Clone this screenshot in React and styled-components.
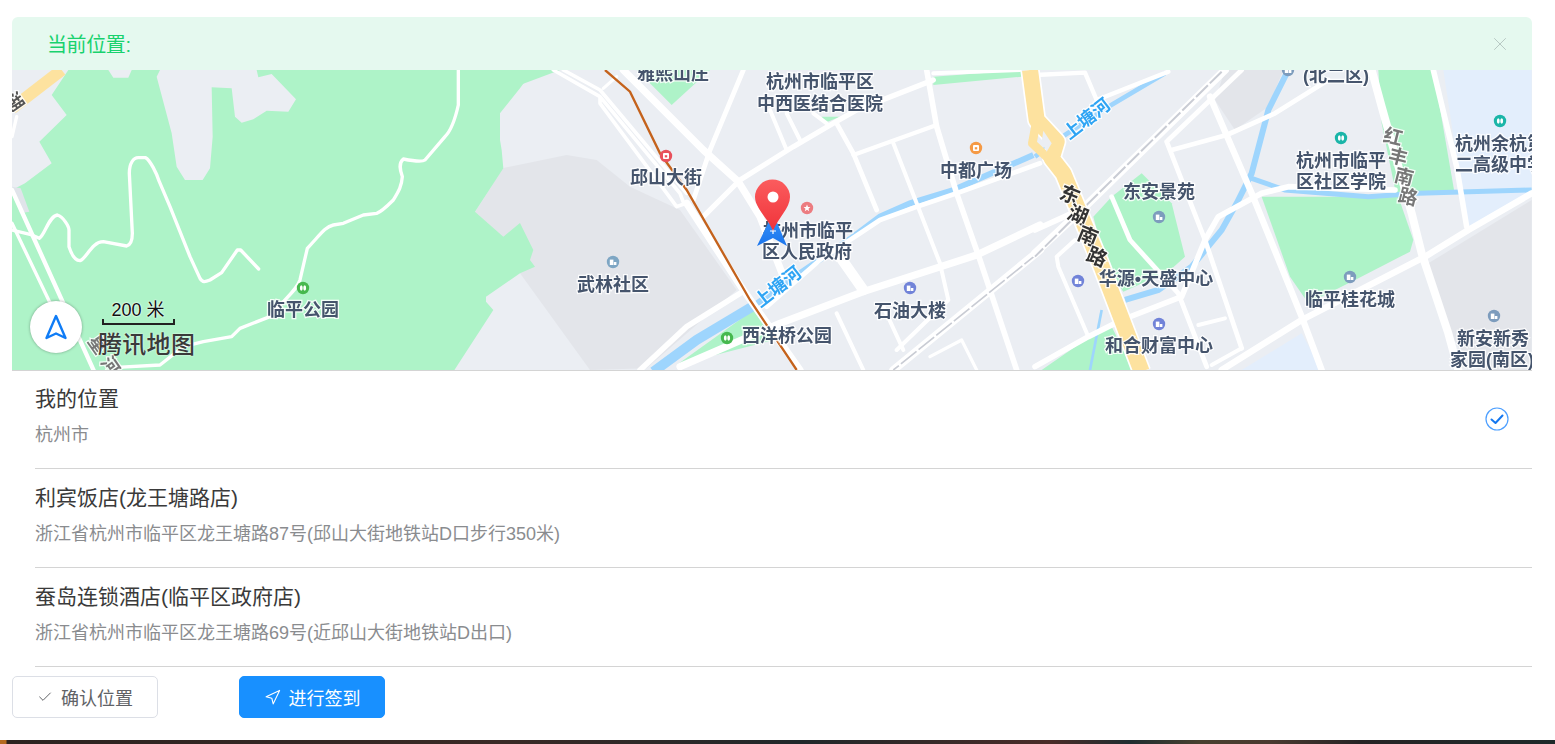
import React from "react";
import styled, { createGlobalStyle } from "styled-components";
import { Check, Navigation, X } from "lucide-react";

const GlobalStyle = createGlobalStyle`
  html, body {
    margin: 0;
    padding: 0;
    height: 100%;
    overflow: hidden;
    background: #fff;
    font-family: "Liberation Sans", "Noto Sans CJK SC", sans-serif;
  }
`;

const Page = styled.div`
  height: 744px;
  display: flex;
  flex-direction: column;
  box-sizing: border-box;
  padding-top: 17px;
`;

const Content = styled.div`
  flex: 1;
  padding: 0 23px 0 12px;
`;

const Alert = styled.div`
  height: 53px;
  box-sizing: border-box;
  padding: 0 21px 0 35px;
  display: flex;
  align-items: center;
  justify-content: space-between;
  background: #e5f9ef;
  border-radius: 6px 6px 0 0;
  color: #18d26e;
  font-size: 20px;
  letter-spacing: -0.4px;
`;

const CloseIcon = styled(X)`
  color: #b4c4bf;
  width: 22px;
  height: 22px;
`;

const MapBox = styled.div`
  position: relative;
  height: 300px;
  overflow: hidden;
  background: #ebeef3;
`;

const MapCanvas = styled.svg`
  display: block;
  width: 1520px;
  height: 300px;
  filter: blur(0.45px);
`;

const MapLabel = styled.text`
  font-family: "Liberation Sans", "Noto Sans CJK SC", sans-serif;
  font-weight: 700;
  font-size: ${(p) => p.$size || 18}px;
  fill: ${(p) => p.$color || "#45546c"};
  text-anchor: middle;
  dominant-baseline: central;
  paint-order: stroke;
  stroke: rgba(255, 255, 255, 0.85);
  stroke-width: 2.5px;
`;

const Compass = styled.div`
  position: absolute;
  left: 18px;
  top: 231px;
  width: 52px;
  height: 52px;
  border-radius: 50%;
  background: #fff;
  box-shadow: 0 0 3px rgba(0, 0, 0, 0.35);
  display: flex;
  align-items: center;
  justify-content: center;
`;

const Scale = styled.div`
  position: absolute;
  left: 90px;
  top: 229px;
  width: 73px;
  height: 26px;
  box-sizing: border-box;
  border: 2px solid #222;
  border-top: 0;
  clip-path: polygon(0 20px, 100% 20px, 100% 100%, 0 100%);
`;

const ScaleText = styled.div`
  position: absolute;
  left: 78px;
  top: 228px;
  width: 96px;
  text-align: center;
  font-size: 18px;
  line-height: 24px;
  color: #111;
  text-shadow: 0 0 2px #fff, 0 0 2px #fff;
`;

const Brand = styled.div`
  position: absolute;
  left: 86px;
  top: 255px;
  font-family: "Noto Sans CJK SC", sans-serif;
  font-weight: 500;
  font-size: 24px;
  line-height: 36px;
  letter-spacing: 0.3px;
  color: #3a3a3a;
  text-shadow: 0 0 2px #fff;
`;

const List = styled.div`
  display: flex;
  flex-direction: column;
`;

const Row = styled.div`
  position: relative;
  height: 99px;
  box-sizing: border-box;
  padding: 0 23px 1px;
  display: flex;
  align-items: center;
  justify-content: space-between;
  &::after {
    content: "";
    position: absolute;
    left: 23px;
    right: 0;
    bottom: 0;
    height: 1px;
    background: #d4d4d4;
  }
  &:first-child::before {
    content: "";
    position: absolute;
    left: 0;
    right: 0;
    top: 0;
    height: 1px;
    background: #d4d4d4;
  }
`;

const RowText = styled.div`
  align-self: flex-start;
  padding-top: 11px;
`;

const RowTitle = styled.div`
  font-size: 21px;
  line-height: 36px;
  color: #3a3a3a;
`;

const RowSub = styled.div`
  font-size: 18px;
  line-height: 36px;
  color: #8a8c8f;
`;

const Actions = styled.div`
  display: flex;
  gap: 81px;
  margin-top: 9px;
`;

const Button = styled.button`
  width: 146px;
  height: 42px;
  box-sizing: border-box;
  display: flex;
  align-items: center;
  justify-content: center;
  gap: 8px;
  padding: 0;
  border-radius: 5px;
  border: 1px solid ${(p) => (p.$primary ? "#1890ff" : "#dcdfe6")};
  background: ${(p) => (p.$primary ? "#1890ff" : "#fff")};
  color: ${(p) => (p.$primary ? "#fff" : "#606266")};
  font-family: inherit;
  font-size: 18px;
`;

const BottomStrip = styled.div`
  height: 4px;
  background: linear-gradient(
    90deg,
    #b56a20 0,
    #b56a20 6px,
    #2c2320 7px,
    #3a2a26 500px,
    #20282a 800px,
    #4a2c28 1050px,
    #1f2d30 1130px,
    #48402f 1200px,
    #4a3a30 1270px,
    #262425 1360px,
    #1e2a2a 1555px
  );
`;

const PLACES = [
  { title: "我的位置", sub: "杭州市", selected: true },
  { title: "利宾饭店(龙王塘路店)", sub: "浙江省杭州市临平区龙王塘路87号(邱山大街地铁站D口步行350米)" },
  { title: "蚕岛连锁酒店(临平区政府店)", sub: "浙江省杭州市临平区龙王塘路69号(近邱山大街地铁站D出口)" },
];

const LABELS = [
  ["雅熙山庄", 673, 74], ["杭州市临平区", 820, 82], ["中西医结合医院", 820, 104],
  ["邱山大街", 666, 178], ["武林社区", 613, 285], ["临平公园", 303, 310],
  ["杭州市临平", 808, 231], ["区人民政府", 807, 252], ["中都广场", 976, 171],
  ["石油大楼", 910, 311], ["西洋桥公园", 787, 336], ["东安景苑", 1159, 192],
  ["华源•天盛中心", 1156, 279], ["和合财富中心", 1159, 346], ["临平桂花城", 1350, 300],
  ["杭州市临平", 1341, 161], ["区社区学院", 1341, 182], ["(北二区)", 1336, 76],
  ["杭州余杭第", 1500, 144], ["二高级中学", 1500, 165], ["新安新秀", 1493, 339],
  ["家园(南区)", 1492, 360],
];

const TILTED = [
  ["红", 1393, 137, 14, "#777", 19], ["丰", 1398, 157, 14, "#777", 19], ["南", 1404, 177, 14, "#777", 19], ["路", 1408, 197, 14, "#777", 19],
  ["东", 1070, 195, 22, "#333", 20], ["湖", 1078, 215, 22, "#333", 20], ["南", 1088, 236, 22, "#333", 20], ["路", 1097, 257, 22, "#333", 20],
  ["上塘河", 1087, 119, -38, "#2ea4f4", 18], ["上塘河", 778, 287, -38, "#2ea4f4", 18],
  ["星", 97, 345, 55, "#777", 18], ["河", 110, 366, 55, "#777", 18], ["湖", 14, 102, 55, "#555", 18],
];

const POIS = [
  [666, 156, "#e8505b", "box"], [807, 208, "#ec7c80", "star"], [976, 148, "#f59a45", "box"], [613, 262, "#7ea6c4", "home"],
  [303, 288, "#46b84e", "park"], [910, 288, "#7183d8", "home"], [727, 338, "#46b84e", "park"], [1159, 217, "#7d9cbd", "home"],
  [1078, 281, "#7183d8", "home"], [1159, 324, "#7183d8", "home"], [1350, 277, "#7d9cbd", "home"], [1341, 138, "#1ab5a8", "park"],
  [1500, 121, "#1ab5a8", "park"], [1494, 316, "#7d9cbd", "home"], [1288, 70, "#7d9cbd", "home"],
];

const WHITE_LEFT = [
  ["M36 690 L90 703 L118 715 C135 705 145 650 172 645 C190 650 207 680 207 690 L207 740 C215 765 225 782 240 782 C260 775 275 725 310 725 L380 738 C392 735 397 725 397 700 L388 520 C388 490 400 473 415 473 L437 473 C450 480 470 520 478 545 L510 620 L570 770 L600 835 C608 848 615 846 630 840 L665 818 L712 750 L722 750 L776 807", 10],
  ["M1375 210 L1375 315 C1365 360 1350 395 1335 410 L1275 480 C1265 487 1240 483 1210 477 C1195 490 1200 510 1207 530 C1205 560 1195 575 1180 600 C1160 620 1145 635 1130 640 L1090 645 L1030 670 L1000 675 C975 680 960 705 922 745 L900 840 C890 870 860 890 810 950 L720 985 L695 1010 L610 1025 L550 1040 L480 1095 L350 1102", 10],
  ["M36 570 L285 1120", 13],
  ["M36 670 L170 950", 10],
  ["M36 410 L50 350", 10],
];

const WHITE_MID = [
  ["M310 30 L550 270 L655 365 L720 470 L790 650", 18],
  ["M670 30 L570 270 L520 420", 12],
  ["M1240 60 L1010 150 L940 190 L820 260 L660 360 L550 470", 13],
  ["M1240 40 L1500 30", 10],
  ["M1220 30 L1250 200 L1310 400 L1380 600 L1490 930", 14],
  ["M950 190 L1000 280 L1070 450", 12],
  ["M1250 195 L1000 285", 10],
  ["M1120 250 L1190 430 L1260 610 L1285 720 L1130 870", 10],
  ["M1560 310 L1310 400 L1190 440 L1080 480 L900 600 L740 740", 12],
  ["M960 590 L1030 690", 26],
  ["M1560 495 L1370 585 L1030 695 L780 790 L480 920", 18],
  ["M660 700 L500 800 L360 930", 14],
  ["M950 760 L1030 930", 10],
  ["M1090 740 L1150 870", 10],
  ["M100 30 L240 110 L480 400 L492 432 L470 440 L240 130 L240 110", 9],
  ["M130 30 L240 90 L500 400", 9],
  ["M290 50 L250 85", 8],
  ["M500 430 L670 690 L840 930", 18],
  ["M750 150 L800 270", 10],
  ["M800 160 L840 240", 10],
  ["M880 160 L920 190", 10],
  ["M1230 890 L1325 840 L1370 930", 8],
  ["M1560 570 L1120 930", 20],
];

const WHITE_RIGHT = [
  ["M570 210 L150 620 L0 760", 20],
  ["M620 210 L400 420", 12],
  ["M0 690 L110 640", 14],
  ["M410 450 L575 405 L720 340 L880 240", 12],
  ["M525 290 L650 580 L800 950 L860 1110", 16],
  ["M395 425 L510 720 L620 1045", 12],
  ["M230 590 L285 720 L430 880 L515 1100", 12],
  ["M120 720 L65 770 L70 800 L160 1010", 10],
  ["M0 1100 L160 1010 L260 960 L440 890 L510 720 L550 650 L680 580 L760 560 L1080 570", 14],
  ["M560 1110 L800 960 L1170 770 L1300 690 L1490 580", 16],
  ["M1010 210 L1040 320 L1130 640 L1160 760 L1240 1000 L1270 1110", 20],
  ["M1195 210 L1265 500 L1295 680", 14],
  ["M490 975 L570 955", 10],
  ["M620 1045 L530 1095", 10],
  ["M0 225 L150 218 L185 300", 11],
  ["M185 300 L400 215", 11],
];

const MapRoads = ({ roads, scale = 1 }) =>
  roads.map(([d, w]) => (
    <path key={d} d={d} fill="none" stroke="#fff" strokeWidth={w * scale} strokeLinejoin="round" strokeLinecap="round" />
  ));

const PoiGlyph = ({ type, x, y, color }) => {
  if (type === "star") {
    return <polygon fill="#fff" points={`${x},${y - 3.5} ${x + 1},${y - 1} ${x + 3.4},${y - 1} ${x + 1.5},${y + 0.8} ${x + 2.2},${y + 3.2} ${x},${y + 1.8} ${x - 2.2},${y + 3.2} ${x - 1.5},${y + 0.8} ${x - 3.4},${y - 1} ${x - 1},${y - 1}`} />;
  }
  if (type === "park") {
    return (
      <g fill="#fff">
        <ellipse cx={x - 1.7} cy={y} rx="1.4" ry="2.8" />
        <ellipse cx={x + 1.7} cy={y} rx="1.4" ry="2.8" />
      </g>
    );
  }
  if (type === "home") {
    return (
      <g fill="#fff">
        <rect x={x - 3.2} y={y - 2.4} width="3.6" height="5.4" />
        <rect x={x + 0.8} y={y} width="2.6" height="3" />
      </g>
    );
  }
  return (
    <g>
      <rect x={x - 3} y={y - 3} width="6" height="6" rx="1" fill="#fff" />
      <rect x={x - 1.2} y={y - 0.8} width="2.4" height="2.2" fill={color} />
    </g>
  );
};

const EAST_LAKE = "M-15 210 L5 360 L65 425 L50 475 L85 520 L200 800 L320 1115";

const MapDrawing = () => (
  <MapCanvas viewBox="12 70 1520 300">
    <defs>
      <linearGradient id="arrowFill" x1="0" y1="0" x2="0" y2="1">
        <stop offset="0" stopColor="#3a96fb" />
        <stop offset="1" stopColor="#1a74ec" />
      </linearGradient>
      <linearGradient id="pinFill" x1="0" y1="0" x2="0" y2="1">
        <stop offset="0" stopColor="#fb5c5e" />
        <stop offset="1" stopColor="#f0333a" />
      </linearGradient>
    </defs>

    {/* darker block under the park edge */}
    <g transform="translate(520 60) scale(0.33333)">
      <polygon fill="#e3e5ea" points="-135,456 -51,324 140,285 230,300 330,380 480,450 650,690 380,925 210,930 0,640 -51,531" />
    </g>

    {/* left part, coordinates are 3x */}
    <g transform="scale(0.33333)">
      <polygon fill="#aef3c8" points="205,210 155,285 200,345 118,425 155,490 75,550 36,570 36,1115 1360,1115 1480,930 1458,905 1458,890 1560,820 1605,800 1590,780 1600,750 1560,669 1510,710 1425,635 1510,505 1505,450 1500,420 1500,340 1560,265 1600,210" />
      <polygon fill="#ebeef3" points="470,230 480,210 770,210 775,232 815,222 888,298 865,335 800,332 760,358 725,368 705,350 695,265 635,262 638,410 630,505 608,540 555,540 530,500 515,400" />
      <polygon fill="#ebeef3" points="325,210 395,210 385,233 340,233" />
      <polygon fill="#e0e4ea" points="36,560 62,565 88,635 60,640" />
      <path d="M36 325 L185 210" fill="none" stroke="#fde29f" strokeWidth="36" />
      <MapRoads roads={WHITE_LEFT} />
    </g>

    {/* middle part */}
    <g transform="translate(520 60) scale(0.33333)">
      <polygon fill="#aef3c8" points="350,30 570,30 455,135" />
      <polygon fill="#aef3c8" points="0,30 120,30 0,75" />
      <polygon fill="#aef3c8" points="1240,50 1505,30 1505,50 1240,75" />
      <polygon fill="#aef3c8" points="905,170 960,170 915,188" />
      <polygon fill="#aef3c8" points="700,750 470,915 760,840" />
      <path d="M1540 285 L1300 390 L1170 430 L1080 470 L1000 530 L840 640 L690 745" fill="none" stroke="#9ed5fd" strokeWidth="18" />
      <path d="M700 738 L530 840 L400 935" fill="none" stroke="#9ed5fd" strokeWidth="30" />
      <MapRoads roads={WHITE_MID} scale={1.2} />
      <path d="M1560 575 L1120 930" fill="none" stroke="#c9ccd4" strokeWidth="5" strokeDasharray="60 8" />
      <path d="M255 30 L330 95 L420 280 L500 390 L690 720 L830 930" fill="none" stroke="#c4621c" strokeWidth="7" />
    </g>

    {/* right part, coordinates are 3x */}
    <g transform="translate(1035 0) scale(0.33333)">
      <polygon fill="#e3e5ea" points="570,210 745,210 700,320 600,390 540,300" />
      <polygon fill="#e3e5ea" points="1180,790 1490,600 1490,1110 1330,1110 1240,1000" />
      <polygon fill="#e3eefc" points="1225,210 1490,210 1490,580 1300,680 1260,440" />
      <polygon fill="#e3eefc" points="620,1110 800,1000 860,1110" />
      <polygon fill="#aef3c8" points="1030,210 1195,210 1258,575 1085,592 1040,370" />
      <polygon fill="#aef3c8" points="680,590 1090,590 1135,720 1125,755 960,840 820,910 765,830" />
      <polygon fill="#aef3c8" points="320,520 410,610 450,770 400,815 265,875 215,800 175,650 230,590" />
      <polygon fill="#aef3c8" points="20,1110 150,1020 230,980 295,1110" />
      <path d="M0 470 L90 405 L220 320 L390 220" fill="none" stroke="#9ed5fd" strokeWidth="14" />
      <path d="M760 210 L700 330 L650 520 L605 610 L560 690 L470 800 L370 870 L270 900" fill="none" stroke="#9ed5fd" strokeWidth="18" />
      <path d="M650 535 L750 570 L1000 590 L1150 580 L1490 570" fill="none" stroke="#9ed5fd" strokeWidth="15" />
      <path d="M200 930 L165 1110" fill="none" stroke="#9ed5fd" strokeWidth="8" />
      <MapRoads roads={WHITE_RIGHT} scale={1.2} />
      <path d="M560 215 L150 620 L0 770" fill="none" stroke="#c9ccd4" strokeWidth="6" strokeDasharray="50 8" />
      <path d={EAST_LAKE} fill="none" stroke="#fff" strokeWidth="58" strokeLinejoin="round" />
      <path d={EAST_LAKE} fill="none" stroke="#fde29f" strokeWidth="48" strokeLinejoin="round" />
      <path d="M5 360 L-8 430 L50 485" fill="none" stroke="#fde29f" strokeWidth="26" strokeLinejoin="round" />
      <polygon fill="#ebeef3" points="25,392 50,430 35,455 20,425" />
    </g>

    {POIS.map(([x, y, color, type]) => (
      <g key={`${x}-${y}`}>
        <circle cx={x} cy={y} r="6.2" fill={color} />
        <PoiGlyph type={type} x={x} y={y} color={color} />
      </g>
    ))}

    {LABELS.map(([text, x, y]) => (
      <MapLabel key={`${text}-${x}`} x={x} y={y}>{text}</MapLabel>
    ))}
    {TILTED.map(([text, x, y, angle, color, size]) => (
      <MapLabel key={`${text}-${x}`} x={x} y={y} $color={color} $size={size} transform={`rotate(${angle} ${x} ${y})`}>{text}</MapLabel>
    ))}

    {/* current location arrow and pin */}
    <polygon points="773,213 757,246 773,238 787,246" fill="url(#arrowFill)" />
    <path d="M770 231 h6 M773 228 v6" stroke="#fff" strokeWidth="1.2" fill="none" />
    <path d="M773 231 C768 218 755 208 755 197 A17.5 17.5 0 0 1 790 197 C790 208 778 218 773 231 Z" fill="url(#pinFill)" />
    <circle cx="773" cy="197" r="5.5" fill="#fff" />
  </MapCanvas>
);

const SelectedIcon = () => (
  <svg width="24" height="24" viewBox="0 0 24 24" fill="none">
    <circle cx="12" cy="12" r="11" stroke="#4d9fff" strokeWidth="1.2" />
    <path d="M6.5 12.5 L10.5 16 L17.5 8.5" stroke="#1477f0" strokeWidth="2" strokeLinecap="round" strokeLinejoin="round" />
  </svg>
);

const CompassArrow = () => (
  <svg width="24" height="28" viewBox="0 0 24 28" fill="none">
    <path d="M12 3 L21.5 25 L12 20.5 L2.5 25 Z" stroke="#0f7cf6" strokeWidth="2.4" strokeLinejoin="round" />
  </svg>
);

export default function App() {
  return (
    <Page>
      <GlobalStyle />
      <Content>
        <Alert>
          <span>当前位置:</span>
          <CloseIcon strokeWidth={1} />
        </Alert>
        <MapBox>
          <MapDrawing />
          <Compass>
            <CompassArrow />
          </Compass>
          <ScaleText>200 米</ScaleText>
          <Scale />
          <Brand>腾讯地图</Brand>
        </MapBox>
        <List>
          {PLACES.map((place) => (
            <Row key={place.title}>
              <RowText>
                <RowTitle>{place.title}</RowTitle>
                <RowSub>{place.sub}</RowSub>
              </RowText>
              {place.selected && <SelectedIcon />}
            </Row>
          ))}
        </List>
        <Actions>
          <Button>
            <Check size={16} strokeWidth={1.5} />
            确认位置
          </Button>
          <Button $primary>
            <Navigation size={17} strokeWidth={1.6} />
            进行签到
          </Button>
        </Actions>
      </Content>
      <BottomStrip />
    </Page>
  );
}
